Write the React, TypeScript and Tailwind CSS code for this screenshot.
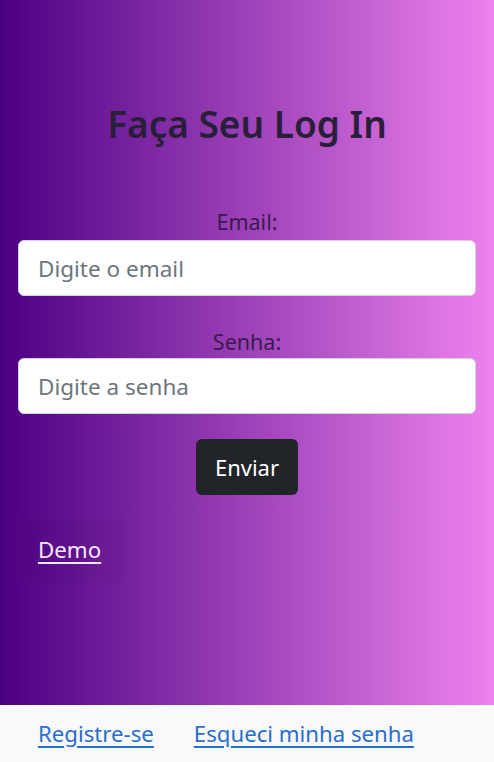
export default function App() {
  return (
    <div className="flex flex-col w-full min-h-screen" style={{ fontFamily: '"Noto Sans", "Open Sans", sans-serif' }}>
      {/* Conteúdo */}
      <main className="h-[705px] flex flex-col px-[18px] bg-[linear-gradient(to_right,#4b0082,#ee82ee)]">
        <h1 className="mt-[98px] text-center text-[37px] leading-[52px] font-semibold text-[#2a1f38]">Faça Seu Log In</h1>

        <form className="mt-[57px] flex flex-col items-center">
          <label className="text-[21.5px] leading-[30px] text-[#3a1a4e]">Email:</label>
          <input
            type="email"
            placeholder="Digite o email"
            className="mt-[3px] w-full h-[56px] px-[19px] rounded-[6px] bg-white border border-[#ced4da] text-[22.5px] text-[#212529] placeholder:text-[#6c757d] outline-none"
          />

          <label className="mt-[31px] text-[21.5px] leading-[30px] text-[#3a1a4e]">Senha:</label>
          <input
            type="password"
            placeholder="Digite a senha"
            className="mt-[1px] w-full h-[56px] px-[19px] rounded-[6px] bg-white border border-[#ced4da] text-[22.5px] text-[#212529] placeholder:text-[#6c757d] outline-none"
          />

          <button type="button" className="mt-[25px] h-[56px] w-[102px] rounded-[6px] bg-[#212529] text-white text-[22px]">
            Enviar
          </button>
        </form>

        <nav className="mt-[23px] w-[107px] h-[63px] flex items-center px-[20px] bg-black/[0.025] rounded-[4px]">
          <a href="#" className="text-[22.3px] text-[#f3e6f7] underline underline-offset-[4px]">Demo</a>
        </nav>
      </main>

      {/* Rodapé */}
      <footer className="h-[57px] bg-[#f8f9fa] flex items-center gap-[40px] px-[38px]">
        <a href="#" className="text-[22.2px] text-[#2a6ecb] underline underline-offset-[4px]">Registre-se</a>
        <a href="#" className="text-[22.2px] text-[#2a6ecb] underline underline-offset-[4px]">Esqueci minha senha</a>
      </footer>
    </div>
  )
}
